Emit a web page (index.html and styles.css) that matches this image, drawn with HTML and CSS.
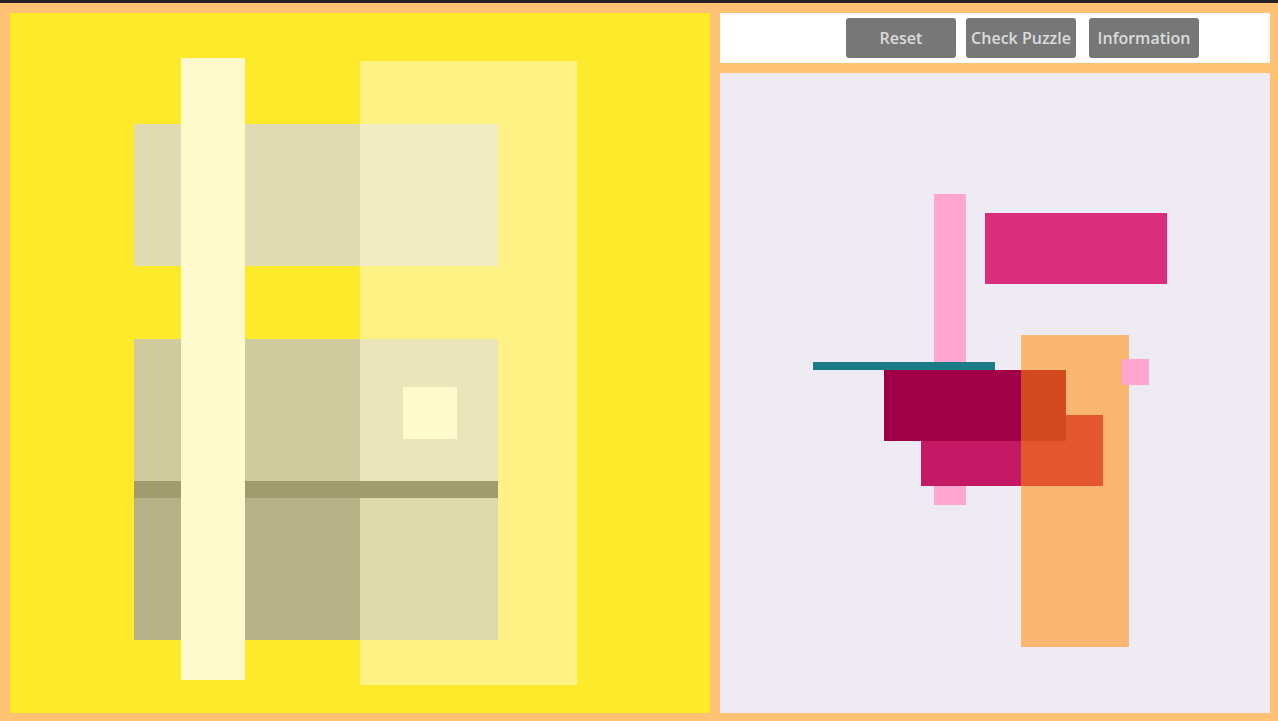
FILE: index.html
```html
<!DOCTYPE html>
<html>
<head>
<meta charset="utf-8">
<link rel="stylesheet" href="styles.css">
</head>
<body>
<div class="app">
  <div class="board">
    <svg class="art" width="700" height="700" viewBox="10 13 700 700" xmlns="http://www.w3.org/2000/svg">
      <rect x="10" y="13" width="700" height="700" fill="#fcea2b"/>
      <rect x="360" y="61" width="217" height="624" fill="#fdf283"/>
      <rect x="134" y="124" width="226" height="142" fill="#e0dbb2"/>
      <rect x="360" y="124" width="138" height="142" fill="#f1ecc3"/>
      <rect x="134" y="339" width="226" height="142" fill="#d0cb9f"/>
      <rect x="360" y="339" width="138" height="142" fill="#e9e4b9"/>
      <rect x="134" y="481" width="364" height="17" fill="#a09c6e"/>
      <rect x="134" y="498" width="226" height="142" fill="#b6b187"/>
      <rect x="360" y="498" width="138" height="142" fill="#dfdaab"/>
      <rect x="181" y="58" width="64" height="622" fill="#fffacc"/>
      <rect x="403" y="387" width="54" height="52" fill="#fffacc"/>
    </svg>
  </div>
  <div class="side">
    <div class="toolbar">
      <button class="btn btn-reset">Reset</button>
      <button class="btn btn-check">Check Puzzle</button>
      <button class="btn btn-info">Information</button>
    </div>
    <div class="canvas">
      <svg class="art" width="550" height="640" viewBox="720 73 550 640" xmlns="http://www.w3.org/2000/svg">
        <rect x="720" y="73" width="550" height="640" fill="#efebf5"/>
        <rect x="934" y="194" width="32" height="311" fill="#ffa6d0"/>
        <rect x="1021" y="335" width="108" height="312" fill="#f8b670"/>
        <rect x="921" y="415" width="182" height="71" fill="#c41865"/>
        <rect x="1021" y="415" width="82" height="71" fill="#e4562e"/>
        <rect x="884" y="370" width="182" height="71" fill="#a00046"/>
        <rect x="1021" y="370" width="45" height="71" fill="#d44a20"/>
        <rect x="1122" y="359" width="27" height="26" fill="#ffa6d0"/>
        <rect x="985" y="213" width="182" height="71" fill="#da2d7b"/>
        <rect x="813" y="362" width="182" height="8" fill="#1b7b87"/>
      </svg>
    </div>
  </div>
</div>
</body>
</html>
```

FILE: styles.css
```css
html, body {
  margin: 0;
  padding: 0;
}
body {
  background: #ffc174;
  border-top: 3px solid #222222;
  width: 1278px;
  height: 718px;
  overflow: hidden;
  font-family: "Open Sans", "Noto Sans", sans-serif;
}
.app {
  display: flex;
  padding: 10px 0 0 10px;
  gap: 10px;
}
.board {
  width: 700px;
  height: 700px;
}
.art {
  display: block;
}
.side {
  width: 550px;
  display: flex;
  flex-direction: column;
  gap: 10px;
}
.toolbar {
  height: 50px;
  background: #ffffff;
  display: flex;
  align-items: flex-start;
  padding: 5px 0 0 126px;
  box-sizing: border-box;
}
.btn {
  width: 110px;
  height: 40px;
  border: none;
  border-radius: 3px;
  background: #777777;
  color: #dcdcdc;
  font-family: "Open Sans", "Noto Sans", sans-serif;
  font-size: 16px;
  font-weight: 600;
  padding: 0;
  margin: 0;
}
.btn-check {
  margin-left: 10px;
}
.btn-info {
  margin-left: 13px;
}
.canvas {
  width: 550px;
  height: 640px;
}
```
